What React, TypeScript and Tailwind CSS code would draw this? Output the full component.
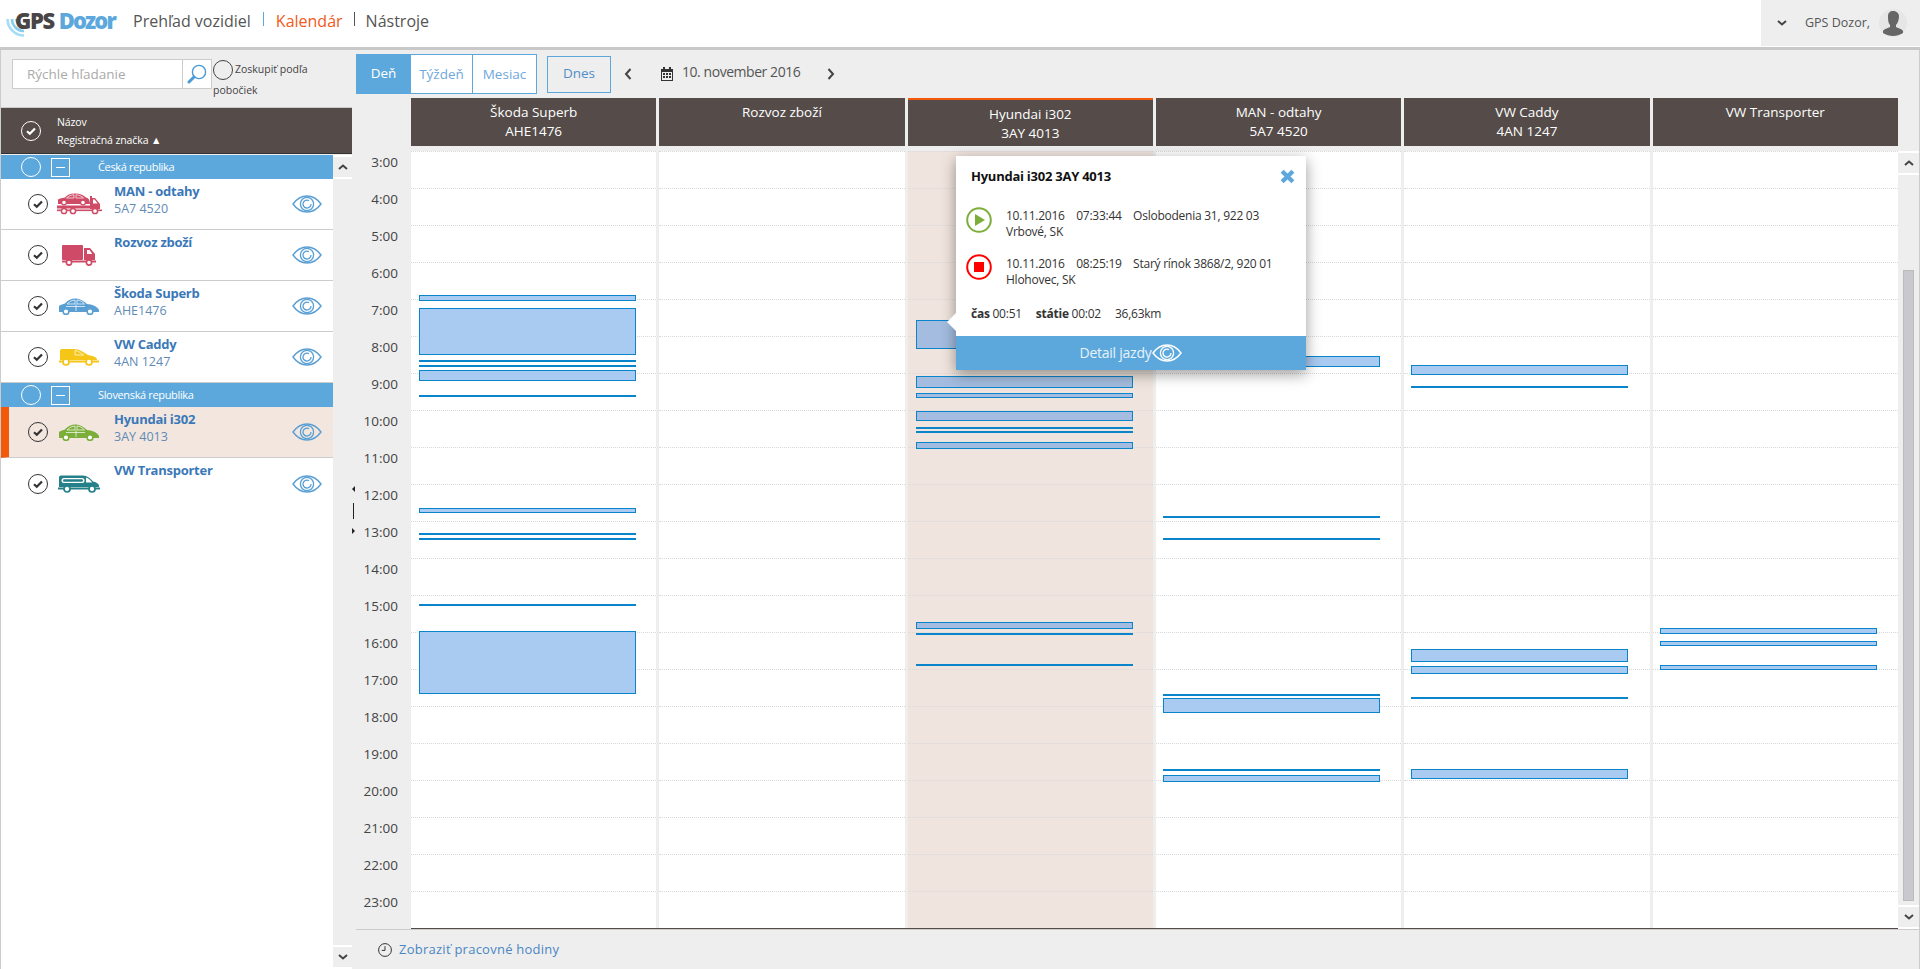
import React from "react";

const font = { fontFamily: '"Open Sans", "Noto Sans", sans-serif' };

type Ev = [number, number];

const hours = Array.from({ length: 21 }, (_, i) => `${i + 3}:00`);

const columns: { name: string; plate?: string; x: number; events: Ev[]; active?: boolean }[] = [
  {
    name: "Škoda Superb",
    plate: "AHE1476",
    x: 8,
    events: [
      [295, 301],
      [308, 355],
      [360, 362],
      [365, 367],
      [370, 381],
      [395, 397],
      [508, 513],
      [533, 535],
      [538, 540],
      [604, 606],
      [631, 694],
    ],
  },
  { name: "Rozvoz zboží", x: 8, events: [] },
  {
    name: "Hyundai i302",
    plate: "3AY 4013",
    x: 8,
    active: true,
    events: [
      [320, 349],
      [376, 388],
      [393, 398],
      [411, 421],
      [427, 429],
      [431, 433],
      [442, 449],
      [622, 629],
      [633, 635],
      [664, 666],
    ],
  },
  {
    name: "MAN - odtahy",
    plate: "5A7 4520",
    x: 7,
    events: [
      [356, 367],
      [516, 518],
      [538, 540],
      [694, 696],
      [698, 713],
      [769, 771],
      [775, 782],
    ],
  },
  {
    name: "VW Caddy",
    plate: "4AN 1247",
    x: 7,
    events: [
      [365, 375],
      [386, 388],
      [649, 662],
      [666, 674],
      [697, 699],
      [769, 779],
    ],
  },
  {
    name: "VW Transporter",
    x: 7,
    events: [
      [628, 634],
      [641, 646],
      [665, 670],
    ],
  },
];

const Eye = ({ className = "", color = "#5a9fd4" }: { className?: string; color?: string }) => (
  <svg viewBox="0 0 30 18" className={className} fill="none" stroke={color}>
    <path d="M1 9C5 3.5 10 1 15 1s10 2.5 14 8c-4 5.5-9 8-14 8S5 14.5 1 9Z" strokeWidth="1.4" />
    <circle cx="15" cy="9" r="6.6" strokeWidth="1.3" />
    <path d="M19 9a4 4 0 1 1-2-3.4" strokeWidth="1.3" />
  </svg>
);

const CheckCircle = ({ dark = true }: { dark?: boolean }) => (
  <svg viewBox="0 0 20 20" className="h-5 w-5 shrink-0" fill="none" stroke={dark ? "#333" : "#fff"}>
    <circle cx="10" cy="10" r="9.5" strokeWidth="1" />
    <path d="M6 10.2l2.8 2.6L14 7.4" strokeWidth="2.2" />
  </svg>
);

const Vehicle = ({ kind }: { kind: string }) => {
  if (kind === "tow") {
    return (
      <svg viewBox="0 0 45 22" className="h-[22px] w-[45px]" fill="#cf4a66">
        <path d="M1 11V6.5C3 5.5 5 5 8 4.5C10 2 13 0.5 18 0.5C23 0.5 26 2 29 4.5C31 5 33 6.5 33 11Z" />
        <path d="M9.5 5C11.5 3 14 2 17 1.8V5ZM19 1.8C22 2 24.5 3 26.5 5H19Z" fill="none" stroke="#fff" strokeWidth="0.7" />
        <circle cx="7" cy="9.5" r="2.4" fill="#fff" stroke="#cf4a66" strokeWidth="1.2" />
        <circle cx="26" cy="9.5" r="2.4" fill="#fff" stroke="#cf4a66" strokeWidth="1.2" />
        <rect x="0" y="12.5" width="33" height="3" />
        <path d="M33 3h2v2h3l5 6v5H33Z" />
        <path d="M36 6.5h1.6l3 4H36Z" fill="#fff" />
        <rect x="0" y="16.5" width="45" height="1.6" />
        <circle cx="7" cy="18" r="2.6" fill="#fff" stroke="#cf4a66" strokeWidth="1.5" />
        <circle cx="16" cy="18" r="2.6" fill="#fff" stroke="#cf4a66" strokeWidth="1.5" />
        <circle cx="38" cy="18" r="2.6" fill="#fff" stroke="#cf4a66" strokeWidth="1.5" />
      </svg>
    );
  }
  if (kind === "truck") {
    return (
      <svg viewBox="0 0 34 21" className="h-[21px] w-[34px]" fill="#cf4a66">
        <rect x="0" y="0" width="21" height="15" rx="1" />
        <path d="M22 3h6l5 6v6H22Z" />
        <path d="M25 5h2.5l2.7 4H25Z" fill="#fff" />
        <rect x="0" y="15.5" width="34" height="2" />
        <circle cx="7" cy="17.5" r="2.6" fill="#fff" stroke="#cf4a66" strokeWidth="1.6" />
        <circle cx="27" cy="17.5" r="2.6" fill="#fff" stroke="#cf4a66" strokeWidth="1.6" />
      </svg>
    );
  }
  if (kind === "van") {
    return (
      <svg viewBox="0 0 40 18" className="h-[18px] w-10" fill="#f5c518">
        <path d="M1 12V3C1 1.5 2 1 4 1H15C20 1 25 4.5 29 7C34 8 38 9 38 11.5V12Z" />
        <path d="M16 2.5C19 3 22 5 24.5 7H16Z" fill="none" stroke="#fff" strokeWidth="0.7" />
        <rect x="0" y="12.5" width="40" height="2" />
        <circle cx="7" cy="14" r="3" fill="#fff" stroke="#f5c518" strokeWidth="1.7" />
        <circle cx="30" cy="14" r="3" fill="#fff" stroke="#f5c518" strokeWidth="1.7" />
      </svg>
    );
  }
  if (kind === "minivan") {
    return (
      <svg viewBox="0 0 42 18" className="h-[18px] w-[42px]" fill="#268089">
        <path d="M1 12V2.5C1 1 2 0.5 4 0.5H25C29 0.5 33 4 35 6.5C39 7.5 41 9 41 11V12Z" />
        <rect x="3.5" y="3" width="23" height="5" rx="2.5" fill="#fff" />
        <rect x="5" y="4.3" width="20" height="2.4" rx="1.2" fill="#268089" />
        <path d="M28 2.5C30.5 3 33 5.5 34 7.5H28Z" fill="#fff" />
        <rect x="0" y="12.5" width="42" height="2" />
        <circle cx="9" cy="14" r="3" fill="#fff" stroke="#268089" strokeWidth="1.7" />
        <circle cx="34" cy="14" r="3" fill="#fff" stroke="#268089" strokeWidth="1.7" />
      </svg>
    );
  }
  const c = kind === "green" ? "#7cae3a" : "#5a9fd4";
  return (
    <svg viewBox="0 0 40 17" className="h-[17px] w-10" fill={c}>
      <path d="M0 13V8C2 6.5 4 6 6 5.5C9 2 12 0.5 17 0.5C21 0.5 25 3 28 6C33 6.5 38 8 40 12V14H0Z" />
      <path d="M8 6C10.5 3.5 13 2.2 16 2V6ZM18 2C21 2.2 23.5 3.8 25.5 6H18ZM17 6V13M7 8.5H26" fill="none" stroke="#fff" strokeWidth="0.7" />
      <circle cx="7" cy="13.5" r="2.9" fill="#fff" stroke={c} strokeWidth="1.6" />
      <circle cx="31" cy="13.5" r="2.9" fill="#fff" stroke={c} strokeWidth="1.6" />
    </svg>
  );
};

const Row = ({
  name,
  plate,
  kind,
  active,
  last,
}: {
  name: string;
  plate?: string;
  kind: string;
  active?: boolean;
  last?: boolean;
}) => (
  <div
    className={`flex h-[51px] items-center ${last ? "" : "border-b border-[#ccc]"} ${
      active ? "border-l-[8px] border-l-[#f4580a] bg-[#f2e6df] pl-[19px]" : "pl-[27px]"
    }`}
  >
    <CheckCircle />
    <div className="flex w-[66px] justify-center pr-[4px]">
      <Vehicle kind={kind} />
    </div>
    <div className="flex-1 self-start pt-[3px] leading-[18px]">
      <div className="text-[13px] font-bold tracking-[-0.25px] text-[#3a78b8]">{name}</div>
      {plate && <div className="text-[12.5px] text-[#5f8ab5]">{plate}</div>}
    </div>
    <Eye className="mr-[11px] h-[18px] w-[30px]" />
  </div>
);

const Group = ({ label }: { label: string }) => (
  <div className="flex h-[24px] items-center bg-[#5ca8dc] pl-[20px] text-white">
    <svg viewBox="0 0 20 20" className="h-5 w-5 shrink-0" fill="none" stroke="#fff">
      <circle cx="10" cy="10" r="9.5" />
    </svg>
    <div className="ml-[10px] flex h-[19px] w-[19px] items-center justify-center border border-white">
      <div className="h-px w-[9px] bg-white" />
    </div>
    <span className="ml-[28px] text-[11px] tracking-[-0.35px]">{label}</span>
  </div>
);

const ScrollBtn = ({ up }: { up?: boolean }) => (
  <div className="flex h-[24px] items-center justify-center border-y-2 border-white bg-[#eee]">
    <svg viewBox="0 0 10 6" className="h-[6px] w-[10px]" fill="none" stroke="#444" strokeWidth="2">
      <path d={up ? "M1 5l4-3.5L9 5" : "M1 1l4 3.5L9 1"} />
    </svg>
  </div>
);

const Sidebar = () => (
  <aside className="flex w-[352px] shrink-0 flex-col border-l border-[#ccc]">
    <div className="flex h-[57px] items-start pl-[11px] pt-[9px]">
      <div className="flex h-[30px] w-[200px] border border-[#ccc] bg-white">
        <div className="flex-1 pl-[14px] text-[13.5px] leading-[28px] text-[#aaa]">Rýchle hľadanie</div>
        <div className="flex w-[29px] items-center justify-center border-l border-[#ccc]">
          <svg viewBox="0 0 20 20" className="h-5 w-5" fill="none" stroke="#4a9ad8">
            <circle cx="12" cy="8" r="6.6" strokeWidth="1.4" />
            <path d="M7 13l-5 5" strokeWidth="3" strokeLinecap="round" />
          </svg>
        </div>
      </div>
      <div className="ml-[1px] w-[125px] text-[10.5px] leading-[21px] text-[#444]">
        <span className="mr-[2px] inline-block h-5 w-5 rounded-full border border-[#444] align-middle" />
        Zoskupiť podľa pobočiek
      </div>
    </div>
    <div className="flex h-[47px] items-center border-y border-[#ccc] border-b-[#333] bg-[#554c49] pl-[20px] text-white">
      <CheckCircle dark={false} />
      <div className="ml-[16px] text-[10.5px] leading-[18px] tracking-[-0.1px]">
        <div>Názov</div>
        <div>Registračná značka ▲</div>
      </div>
    </div>
    <div className="flex flex-1 pt-px">
      <div className="flex-1 bg-white">
        <Group label="Česká republika" />
        <Row name="MAN - odtahy" plate="5A7 4520" kind="tow" />
        <Row name="Rozvoz zboží" kind="truck" />
        <Row name="Škoda Superb" plate="AHE1476" kind="car" />
        <Row name="VW Caddy" plate="4AN 1247" kind="van" />
        <Group label="Slovenská republika" />
        <Row name="Hyundai i302" plate="3AY 4013" kind="green" active />
        <Row name="VW Transporter" kind="minivan" last />
      </div>
      <div className="flex w-[19px] flex-col justify-between bg-[#eee]">
        <ScrollBtn up />
        <ScrollBtn />
      </div>
    </div>
  </aside>
);

const Toolbar = () => (
  <div className="flex h-[48px] items-start pt-[4px]">
    <div className="flex h-[40px] text-[13.5px] leading-[38px] text-[#6fa8dc]">
      <div className="w-[55px] bg-[#5ca8dc] text-center text-white">Deň</div>
      <div className="w-[62px] border-y border-r border-[#5ca8dc] bg-white text-center">Týždeň</div>
      <div className="w-[64px] border-y border-r border-[#5ca8dc] bg-white text-center">Mesiac</div>
    </div>
    <div className="ml-[10px] mt-[2px] h-[37px] w-[64px] border border-[#5ca8dc] text-center text-[13.5px] leading-[33px] text-[#4f8fc8]">
      Dnes
    </div>
    <svg viewBox="0 0 8 12" className="ml-[13px] mt-[14px] h-3 w-2" fill="none" stroke="#444" strokeWidth="2">
      <path d="M6.5 1L2 6l4.5 5" />
    </svg>
    <svg viewBox="0 0 12 14" className="ml-[29px] mt-[13px] h-[14px] w-3" fill="#333">
      <path d="M0 2h2V0h2v2h4V0h2v2h2v12H0Zm1 3v8h10V5Z" />
      <path d="M2 6h2v2H2zM5 6h2v2H5zM8 6h2v2H8zM2 9h2v2H2zM5 9h2v2H5zM8 9h2v2H8z" />
    </svg>
    <div className="ml-[9px] mt-[8px] w-[118px] whitespace-nowrap text-[14px] leading-[20px] tracking-[-0.45px] text-[#555]">
      10. november 2016
    </div>
    <svg viewBox="0 0 8 12" className="ml-[27px] mt-[14px] h-3 w-2" fill="none" stroke="#444" strokeWidth="2">
      <path d="M1.5 1L6 6l-4.5 5" />
    </svg>
  </div>
);

const Popup = () => (
  <div className="absolute left-[545px] top-[5px] z-10 h-[214px] w-[350px] bg-white text-[12px] leading-[16px] tracking-[-0.25px] text-[#333] shadow-[0_4px_14px_rgba(0,0,0,0.4)]">
    <div className="absolute left-[-9px] top-[157px] h-0 w-0 border-y-[9px] border-r-[9px] border-y-transparent border-r-white" />
    <div className="flex items-center justify-between pl-[15px] pr-[11px] pt-[12px]">
      <span className="text-[13px] font-bold text-[#111]">Hyundai i302 3AY 4013</span>
      <svg viewBox="0 0 14 14" className="h-[15px] w-[15px]" fill="none" stroke="#5ca8dc" strokeWidth="4">
        <path d="M2 2l10 10M12 2L2 12" />
      </svg>
    </div>
    <div className="mt-[24px] flex pl-[10px]">
      <svg viewBox="0 0 26 26" className="mt-[-1px] h-[26px] w-[26px] shrink-0" fill="none">
        <circle cx="13" cy="13" r="11.8" stroke="#7cae3a" strokeWidth="2" />
        <path d="M9 7l10 6-10 6Z" fill="#7cae3a" />
      </svg>
      <div className="ml-[14px]">
        <div className="whitespace-pre">10.11.2016    07:33:44    Oslobodenia 31, 922 03</div>
        <div>Vrbové, SK</div>
      </div>
    </div>
    <div className="mt-[16px] flex pl-[10px]">
      <svg viewBox="0 0 26 26" className="mt-[-2px] h-[26px] w-[26px] shrink-0" fill="none">
        <circle cx="13" cy="13" r="11.8" stroke="#f00" strokeWidth="2" />
        <rect x="8" y="8" width="10" height="10" fill="#f00" />
      </svg>
      <div className="ml-[14px]">
        <div className="whitespace-pre">10.11.2016    08:25:19    Starý rínok 3868/2, 920 01</div>
        <div>Hlohovec, SK</div>
      </div>
    </div>
    <div className="mt-[18px] flex gap-[14px] pl-[15px]">
      <span>
        <b className="font-bold">čas</b> 00:51
      </span>
      <span>
        <b className="font-bold">státie</b> 00:02
      </span>
      <span>36,63km</span>
    </div>
    <div className="absolute inset-x-0 bottom-0 flex h-[34px] items-center justify-center bg-[#5ca8dc] text-[14px] text-[#e8f2fa]">
      Detail jazdy
      <Eye className="ml-[1px] h-[18px] w-[30px]" color="#fff" />
    </div>
  </div>
);

const Calendar = () => (
  <div className="flex min-h-0 flex-1 flex-col">
    <div className="flex h-[48px]">
      <div className="w-[55px]" />
      <div className="grid w-[1487px] grid-cols-6 gap-x-[3px]">
        {columns.map((c) => (
          <div
            key={c.name}
            className={`bg-[#554c49] pt-[5px] text-center text-[13.5px] leading-[19px] text-white ${
              c.active ? "border-t-2 border-[#f4580a] pt-[2px]" : ""
            }`}
          >
            <div>{c.name}</div>
            {c.plate && <div>{c.plate}</div>}
          </div>
        ))}
      </div>
    </div>
    <div className="mt-[5px] flex h-[778px]">
      <div className="w-[55px] pr-[13px] text-right text-[13.5px] text-[#444]">
        {hours.map((h) => (
          <div key={h} className="h-[37px] leading-[22px]">
            {h}
          </div>
        ))}
      </div>
      <div className="relative grid h-[778px] w-[1487px] grid-cols-6 gap-x-[3px] border-b border-[#554c49]">
        {columns.map((c) => (
          <div key={c.name} className={`relative ${c.active ? "bg-[#f0e5de]" : "bg-white"}`}>
            {hours.map((h) => (
              <div key={h} className="h-[37px] border-t border-dotted border-[#d8d8d8]" />
            ))}
            {c.events.map(([a, b]) => (
              <div
                key={a}
                className={`absolute box-border w-[217px] border border-[#0a85cc] ${
                  c.active ? "bg-[#a3bcdf]" : "bg-[#a9caf1]"
                }`}
                style={{ top: a - 151, height: b - a, left: c.x }}
              />
            ))}
          </div>
        ))}
        <Popup />
      </div>
      <div className="flex w-[21px] flex-col">
        <ScrollBtn up />
        <div className="flex-1 px-[5px]">
          <div className="mt-[95px] h-[631px] border border-[#bbb] bg-[#c8c8ce]" />
        </div>
        <ScrollBtn />
      </div>
    </div>
    <div className="flex h-[40px] items-center border-t border-[#ccc] pl-[22px]">
      <svg viewBox="0 0 14 14" className="h-[14px] w-[14px]" fill="none" stroke="#333">
        <circle cx="7" cy="7" r="6.4" />
        <path d="M7 3.2V7.4H3.8" />
      </svg>
      <span className="ml-[7px] text-[13px] tracking-[0.25px] text-[#4a86c5]">Zobraziť pracovné hodiny</span>
    </div>
  </div>
);

const App = () => {
  return (
    <div style={font} className="flex h-[969px] w-[1920px] flex-col overflow-hidden bg-[#eee]">
      <header className="flex h-[50px] shrink-0 items-start border-b-[3px] border-[#c8c8c8] bg-white">
        <div className="relative flex h-[41px] w-[133px] items-center pl-[15px]">
          <svg viewBox="0 0 18 18" className="absolute left-[6px] top-[19px] h-[18px] w-[18px]" fill="none">
            <path d="M1.5 0A16.5 16.5 0 0 0 18 16.5" stroke="#a5dcf6" strokeWidth="2.6" />
            <path d="M6 0A12 12 0 0 0 18 12" stroke="#86cdf0" strokeWidth="2.6" />
            <path d="M10.5 0A7.5 7.5 0 0 0 18 7.5" stroke="#6cbde8" strokeWidth="2.6" />
          </svg>
          <span className="relative text-[22px] font-extrabold tracking-[-1.4px] text-[#4a4545]">GPS</span>
          <span className="relative ml-[5px] text-[22px] font-extrabold tracking-[-1.9px] text-[#5ca8dc]">Dozor</span>
        </div>
        <nav className="flex h-[42px] items-center text-[16px] text-[#555]">
          <span>Prehľad vozidiel</span>
          <span className="mx-[12px] mb-[4px] h-[14px] w-px bg-[#5ca8dc]" />
          <span className="text-[#f05a22]">Kalendár</span>
          <span className="mx-[11px] mb-[4px] h-[14px] w-px bg-[#555]" />
          <span>Nástroje</span>
        </nav>
        <div className="ml-auto flex h-[46px] w-[159px] items-center bg-[#eee] pl-[16px]">
          <svg viewBox="0 0 10 6" className="h-[6px] w-[10px]" fill="none" stroke="#444" strokeWidth="2">
            <path d="M1 1l4 3.5L9 1" />
          </svg>
          <span className="ml-[18px] whitespace-nowrap text-[12.5px] text-[#555]">GPS Dozor,</span>
          <svg viewBox="0 0 28 28" className="ml-[9px] h-7 w-7" fill="#666">
            <circle cx="14" cy="14" r="14" fill="#e6e6e6" />
            <path d="M9 7c0-3 2-5 5-5s6 2 6 5-1 7-3 9v2c2 1 6 2 7 4v2c-3 2-7 3-10 3s-7-1-10-3v-2c1-2 5-3 7-4v-2c-2-2-2-6-2-9Z" />
          </svg>
        </div>
      </header>
      <div className="flex min-h-0 flex-1 border-r border-[#ccc]">
        <Sidebar />
        <div className="relative w-[4px] shrink-0">
          <div className="absolute left-[0px] top-[436px] h-0 w-0 border-y-[3px] border-r-[3px] border-y-transparent border-r-[#222]" />
          <div className="absolute left-[1px] top-[453px] h-[16px] w-px bg-[#222]" />
          <div className="absolute left-[0px] top-[478px] h-0 w-0 border-y-[3px] border-l-[3px] border-y-transparent border-l-[#222]" />
        </div>
        <main className="flex min-w-0 flex-1 flex-col">
          <Toolbar />
          <Calendar />
        </main>
      </div>
    </div>
  );
};

export default App;
